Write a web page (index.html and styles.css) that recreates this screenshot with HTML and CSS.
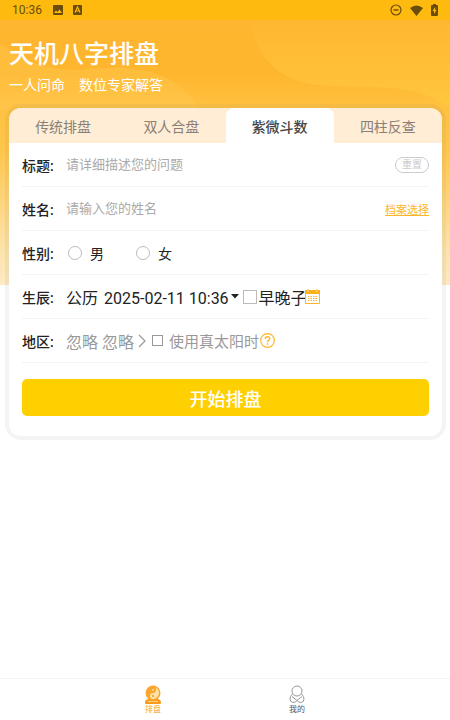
FILE: index.html
```html
<!DOCTYPE html>
<html lang="zh-CN">
<head>
<meta charset="utf-8">
<meta name="viewport" content="width=device-width, initial-scale=1">
<title>天机八字排盘</title>
<link rel="stylesheet" href="styles.css">
</head>
<body>
<div class="app">
  <div class="backdrop" aria-hidden="true">
    <svg class="waves" viewBox="0 0 450 285" preserveAspectRatio="none">
      <defs>
        <linearGradient id="wave" x1="0" y1="0" x2="0" y2="1">
          <stop offset="0" stop-color="#ffc83e" stop-opacity=".1"/>
          <stop offset="1" stop-color="#ffc83e" stop-opacity=".8"/>
        </linearGradient>
      </defs>
      <path d="M251 20C256 62 284 86 335 86C385 88 418 84 450 108V20Z" fill="url(#wave)"/>
      <path d="M0 44C28 64 48 70 82 70C130 64 176 68 200 110H0Z" fill="#ffcb55" opacity=".35"/>
    </svg>
  </div>

  <div class="status">
    <span class="clock">10:36</span>
    <svg width="10" height="10" viewBox="0 0 10 10"><path fill="currentColor" fill-rule="evenodd" d="M1 0H9Q10 0 10 1V9Q10 10 9 10H1Q0 10 0 9V1Q0 0 1 0ZM1 8H9L6.500 4.500L4.500 7L3 5.500Z"/></svg>
    <svg class="app-mark" width="9" height="10" viewBox="0 0 9 10"><rect width="9" height="10" rx="1" fill="currentColor"/><path d="M2 7.500L4.500 2L7 7.500M3 6H6" fill="none" stroke="#ffba10" stroke-width="1.200"/></svg>
    <span class="spacer"></span>
    <svg width="12" height="12" viewBox="0 0 12 12"><circle cx="6" cy="6" r="5" fill="none" stroke="currentColor" stroke-width="1.200"/><path d="M3.500 6H8.500" stroke="currentColor" stroke-width="1.400"/></svg>
    <svg width="13" height="11" viewBox="0 0 13 11"><path d="M0 3Q6.500-2 13 3L6.500 11Z" fill="currentColor"/></svg>
    <svg width="7" height="12" viewBox="0 0 7 12"><path d="M2 0H5V1H6Q7 1 7 2V11Q7 12 6 12H1Q0 12 0 11V2Q0 1 1 1H2Z" fill="currentColor"/><path d="M4.200 3L1.500 7H3V10L5.500 6H4.200Z" fill="#ffba10"/></svg>
  </div>

  <header class="heading">
    <h1>天机八字排盘</h1>
    <p>一人问命　数位专家解答</p>
  </header>

  <main class="card">
    <nav class="tabs">
      <button type="button">传统排盘</button>
      <button type="button">双人合盘</button>
      <button type="button" class="active">紫微斗数</button>
      <button type="button">四柱反查</button>
    </nav>
    <form class="form">
      <div class="row">
        <label class="name" for="subject">标题:</label>
        <input class="text" id="subject" type="text" placeholder="请详细描述您的问题">
        <button class="reset" type="reset">重置</button>
      </div>
      <div class="row">
        <label class="name" for="person">姓名:</label>
        <input class="text" id="person" type="text" placeholder="请输入您的姓名">
        <a class="archive" href="#archive">档案选择</a>
      </div>
      <div class="row" role="radiogroup" aria-labelledby="gender">
        <span class="name" id="gender">性别:</span>
        <label class="radio"><input type="radio" name="gender">男</label>
        <label class="radio"><input type="radio" name="gender">女</label>
      </div>
      <div class="row">
        <span class="name">生辰:</span>
        <button class="picker date" type="button"><span>公历</span><span>2025-02-11 10:36</span><svg width="8" height="5" viewBox="0 0 8 5"><path d="M0 0H8L4 4.500Z" fill="currentColor"/></svg></button>
        <label class="check late"><input type="checkbox">早晚子</label>
        <button class="icon calendar" type="button" aria-label="日历">
          <svg width="15" height="15" viewBox="0 0 15 15"><path d="M.5 2V14.500H14.500V2Z" fill="#fff" stroke="#fdb52b"/><path d="M0 1H2V3H4V1H11V3H13V1H15V5H0Z" fill="#fdb015"/><path d="M3 0V2.500M12 0V2.500" stroke="#fdb015"/><path d="M3 7.500H12M3 9.500H12M3 11.500H12" stroke="#fdb52b" stroke-width="1.200" stroke-dasharray="1.500 1"/></svg>
        </button>
      </div>
      <div class="row">
        <span class="name">地区:</span>
        <button class="picker area" type="button">忽略 忽略<svg width="8" height="14" viewBox="0 0 8 14"><path d="M1 1L7 7L1 13" fill="none" stroke="currentColor" stroke-width="1.200"/></svg></button>
        <label class="check solar"><input type="checkbox">使用真太阳时</label>
        <button class="icon help" type="button" aria-label="说明">
          <svg width="15" height="15" viewBox="0 0 15 15"><circle cx="7.500" cy="7.500" r="6.800" fill="none" stroke="#fdb52b" stroke-width="1.200"/><path d="M5.300 5.900Q5.300 3.800 7.500 3.800T9.700 5.700Q9.700 6.700 8.500 7.400T7.500 9.300M7.500 10.300V11.700" fill="none" stroke="#fdb52b" stroke-width="1.400"/></svg>
        </button>
      </div>
      <button class="submit" type="button">开始排盘</button>
    </form>
  </main>

  <nav class="bottom">
    <a class="current" href="#chart">
      <svg width="18" height="19" viewBox="0 0 18 19"><path d="M1 18Q1 14 5 14H13Q17 14 17 18Q17 19 16 19H2Q1 19 1 18Z" fill="#f99a1c"/><circle cx="9" cy="8" r="7.500" fill="#fba52c"/><path d="M9 2A6 6 0 0 1 9 14A3 3 0 0 1 9 8A3 3 0 0 0 9 2Z" fill="#ffe3a8"/><circle cx="9" cy="5" r="1" fill="#ffe3a8"/><circle cx="9" cy="11" r="1" fill="#f99a1c"/><path d="M4 16.500H14" stroke="#ffd17c"/></svg>
      排盘
    </a>
    <a href="#me">
      <svg width="16" height="19" viewBox="0 0 16 19"><g fill="none" stroke="#999"><circle cx="8" cy="6" r="5"/><path d="M3.500 9Q1 11 1 14Q1 17 4 17.500Q6.500 17.500 8 15.500Q9.500 17.500 12 17.500Q15 17 15 14Q15 11 12.500 9M3 11.500L8 15.500L13 11.500"/></g></svg>
      我的
    </a>
  </nav>
</div>
</body>
</html>
```
FILE: styles.css
```css
* {
  box-sizing: border-box;
}

body {
  margin: 0;
  background: #fff;
  color: #222;
  font-family: Roboto, "Noto Sans CJK SC", sans-serif;
  font-size: 14px;
}

button,
input {
  margin: 0;
  padding: 0;
  border: 0;
  background: none;
  color: inherit;
  font: inherit;
}

svg {
  flex: none;
}

.app {
  position: relative;
  display: flex;
  flex-direction: column;
  min-height: 100vh;
}

.backdrop {
  position: absolute;
  inset: 0 0 auto;
  height: 285px;
  background: linear-gradient(#ffb52f 0, #ffb62f 75px, #ffc13f 105px, #ffc64b 150px, #fde3ab 250px, #fdeac3 285px);
}

.waves {
  display: block;
  width: 100%;
  height: 100%;
}

.status {
  position: relative;
  display: flex;
  align-items: center;
  gap: 8px;
  height: 20px;
  padding: 0 12px;
  background: #ffba10;
  color: #6a4c0b;
  font-size: 12px;
}

.clock {
  margin-right: 3px;
}

.app-mark {
  margin-left: 2px;
}

.spacer {
  flex: 1;
}

.heading {
  position: relative;
  padding: 16px 9px 12px;
  color: #fff;
}

.heading h1 {
  margin: 0;
  font-size: 25px;
  font-weight: 500;
  line-height: 38px;
}

.heading p {
  margin: 0;
  line-height: 22px;
}

.card {
  position: relative;
  margin: 0 8px 0 9px;
  border-radius: 12px;
  background: #fff;
  box-shadow: 0 0 0 4px rgba(120, 120, 120, .08);
}

.tabs {
  display: flex;
  height: 35px;
  overflow: hidden;
  border-radius: 12px 12px 0 0;
  background: #ffedd5;
}

.tabs button {
  flex: 1;
  color: #8a8078;
}

.tabs .active {
  border-radius: 8px 8px 0 0;
  background: #fff;
  color: #444;
  font-weight: 500;
}

.form {
  padding: 0 13px 20px;
}

.row {
  display: flex;
  align-items: center;
  height: 44px;
  border-bottom: 1px solid #f3f3f3;
}

.name {
  flex: none;
  width: 44px;
  font-weight: 500;
}

.text {
  flex: 1;
  min-width: 0;
  outline: 0;
  font-size: 13px;
}

.text::placeholder {
  color: #aaa;
}

.reset {
  width: 34px;
  height: 16px;
  border: 1px solid #ccc;
  border-radius: 8px;
  color: #ccc;
  font-size: 10px;
  line-height: 14px;
}

.archive {
  color: #fdb52b;
  font-size: 11px;
}

.radio {
  display: flex;
  align-items: center;
  gap: 8px;
  width: 68px;
  padding-left: 2px;
}

.radio input,
.check input {
  flex: none;
  appearance: none;
  width: 14px;
  height: 14px;
  border: 1px solid #bbb;
  background: #fff;
}

.radio input {
  border-radius: 50%;
}

.picker {
  display: flex;
  align-items: center;
  font-size: 16px;
  white-space: nowrap;
}

.date {
  align-items: baseline;
  gap: 6px;
}

.date svg {
  align-self: center;
  margin-left: -4px;
}

.area {
  gap: 4px;
  color: #999;
}

.check {
  display: flex;
  align-items: center;
  white-space: nowrap;
}

.late {
  gap: 2px;
  margin-left: 4px;
  font-size: 16px;
}

.solar {
  gap: 6px;
  margin-left: 6px;
  color: #999;
  font-size: 15px;
}

.solar input {
  width: 11px;
  height: 11px;
  border-color: #999;
}

.icon {
  display: flex;
}

.calendar {
  margin-left: -2px;
}

.help {
  margin-left: 1px;
}

.submit {
  display: block;
  width: 100%;
  height: 37px;
  margin-top: 16px;
  border-radius: 5px;
  background: #ffd000;
  color: #fff;
  font-size: 18px;
  font-weight: 500;
}

.bottom {
  display: flex;
  justify-content: center;
  height: 42px;
  margin-top: auto;
  border-top: 1px solid #f5f5f5;
}

.bottom a {
  display: flex;
  flex: 0 1 32%;
  flex-direction: column;
  align-items: center;
  padding-top: 6px;
  color: #555;
  font-size: 8px;
  line-height: 12px;
  text-decoration: none;
}

.bottom .current {
  color: #fba52c;
}
```
